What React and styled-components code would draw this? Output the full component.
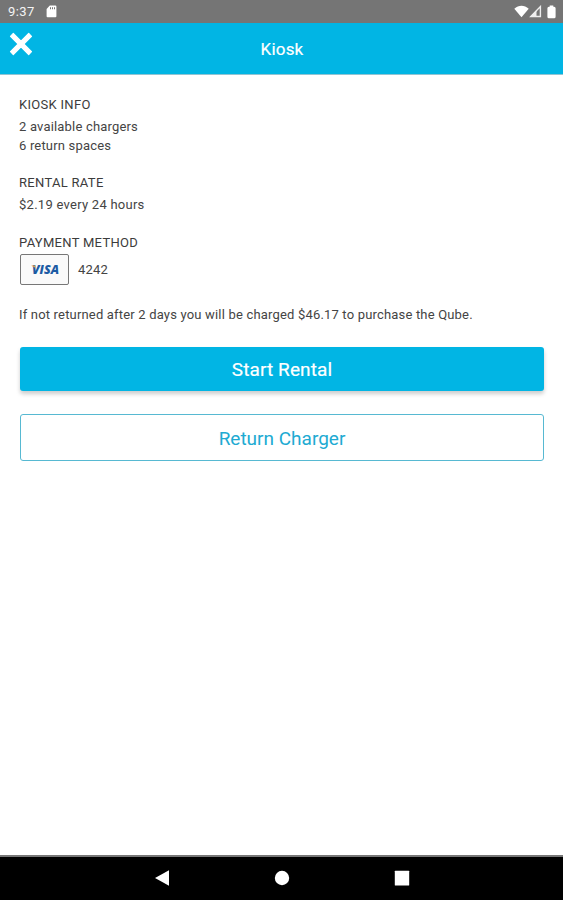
import React from "react";
import styled, { createGlobalStyle } from "styled-components";

const GlobalStyle = createGlobalStyle`
  * {
    box-sizing: border-box;
  }

  body {
    margin: 0;
    background: #fff;
    font-family: Roboto, "Liberation Sans", sans-serif;
  }
`;

const Screen = styled.div`
  display: flex;
  flex-direction: column;
  height: 100vh;
  overflow: hidden;
  background: #fff;
`;

const StatusBar = styled.div`
  display: flex;
  align-items: center;
  flex: none;
  height: 23px;
  padding: 0 7px 0 8px;
  background: #757575;
  color: #f4f4f4;
`;

const Clock = styled.span`
  width: 38px;
  padding-top: 1px;
  font-size: 13px;
  line-height: 22px;
  letter-spacing: 0.4px;
`;

const StatusIcons = styled.div`
  display: flex;
  align-items: center;
  margin-left: auto;
`;

const Header = styled.header`
  display: grid;
  grid-template-columns: 44px 1fr 44px;
  flex: none;
  height: 52px;
  background: #01b5e4;
  border-bottom: 1px solid #90c4d3;
`;

const CloseButton = styled.button`
  display: flex;
  align-items: flex-start;
  padding: 9px 0 0 9px;
  border: 0;
  background: none;
  color: #fff;
`;

const Title = styled.h1`
  margin: 0;
  padding-left: 1px;
  color: #fff;
  font-size: 17px;
  font-weight: 400;
  line-height: 53px;
  letter-spacing: 0.2px;
  text-align: center;
  -webkit-text-stroke: 0.2px #fff;
`;

const Content = styled.main`
  flex: 1;
  padding: 20px 19px 0 20px;
`;

const Section = styled.section`
  margin-bottom: 18px;
`;

const Label = styled.h2`
  margin: 0 0 2px -1px;
  color: #3c3c3c;
  font-size: 13px;
  font-weight: 400;
  line-height: 20px;
  letter-spacing: 0.3px;
`;

const Line = styled.p`
  margin: 0 0 0 -1px;
  color: #444;
  font-size: 13px;
  line-height: 19px;
  letter-spacing: 0.18px;
`;

const Rate = styled(Section)`
  margin-bottom: 19px;

  ${Line} {
    letter-spacing: 0.26px;
  }
`;

const Payment = styled.div`
  display: flex;
  align-items: center;
  gap: 10px;
  margin-top: -1px;
`;

const CardBadge = styled.div`
  width: 49px;
  height: 31px;
  border: 1px solid #777;
  border-radius: 2px;
  background: #fafafa;
`;

const Button = styled.button`
  display: block;
  width: 100%;
  height: ${(props) => (props.$outline ? "47px" : "44px")};
  margin-bottom: 23px;
  padding: ${(props) => (props.$outline ? "2px 0 0" : "0")};
  border: ${(props) => (props.$outline ? "1px solid #57b9d2" : "0")};
  border-radius: 3px;
  background: ${(props) => (props.$outline ? "#fff" : "#01b5e4")};
  box-shadow: ${(props) => (props.$outline ? "none" : "0 3px 4px rgba(0, 0, 0, 0.2)")};
  color: ${(props) => (props.$outline ? "#20aad2" : "#fff")};
  font-family: inherit;
  font-size: 19px;
  font-weight: 400;
  letter-spacing: ${(props) => (props.$outline ? "0" : "0.1px")};
  -webkit-text-stroke: ${(props) => (props.$outline ? "0" : "0.2px #fff")};
`;

const Note = styled(Line)`
  margin: 20px 0 23px -1px;
`;

const NavBar = styled.nav`
  display: flex;
  align-items: center;
  justify-content: center;
  gap: 104px;
  flex: none;
  height: 45px;
  padding-bottom: 2px;
  border-top: 2px solid #777;
  background: #000;
`;

const SdCardIcon = () => (
  <svg width="11" height="13" viewBox="0 0 11 13">
    <path
      fill="#fff"
      fillRule="evenodd"
      d="M3.8 0.5h5.6a1 1 0 0 1 1 1v9.8a1 1 0 0 1-1 1H1.6a1 1 0 0 1-1-1V4z M4 2.2v2h1v-2z M6 2.2v2h1v-2z M8 2.2v2h1v-2z"
    />
  </svg>
);

const WifiIcon = () => (
  <svg width="15" height="13" viewBox="0 0 15 13">
    <path fill="#fff" d="M0.3 3.7C4.5-0.2 10.5-0.2 14.7 3.7L7.5 12.2z" />
  </svg>
);

const SignalIcon = () => (
  <svg width="13" height="13" viewBox="0 0 13 13">
    <path fill="none" stroke="#eee" strokeWidth="1.4" d="M1.8 11.5L11.4 1.6v9.9z" />
    <path fill="#eee" d="M1 12l6.5-6.7V12z" />
  </svg>
);

const BatteryIcon = () => (
  <svg width="9" height="14" viewBox="0 0 9 14">
    <path
      fill="#fff"
      d="M2.7 0.4h3.6v1.4h0.8q1.5 0 1.5 1.5v8.4q0 1.5-1.5 1.5H1.9q-1.5 0-1.5-1.5V3.3q0-1.5 1.5-1.5h0.8z"
    />
  </svg>
);

const CloseIcon = () => (
  <svg width="24" height="24" viewBox="0 0 24 24">
    <path
      fill="#fff"
      stroke="#fff"
      strokeWidth="1.2"
      strokeLinejoin="round"
      d="M4.3 1.5L12 9.2L19.7 1.5L22.5 4.3L14.8 12L22.5 19.7L19.7 22.5L12 14.8L4.3 22.5L1.5 19.7L9.2 12L1.5 4.3z"
    />
  </svg>
);

const VisaLogo = () => (
  <svg width="47" height="29" viewBox="0 0 47 29">
    <text
      x="11"
      y="19"
      fill="#1c5ba4"
      fontFamily="Open Sans, sans-serif"
      fontSize="11.5"
      fontStyle="italic"
      fontWeight="800"
      textLength="27"
      lengthAdjust="spacingAndGlyphs"
    >
      VISA
    </text>
    <path fill="#e9a347" d="M10.6 10.5h3.4l1 3.4q-1.4-2.3-4.4-2.9z" />
  </svg>
);

const App = () => {
  return (
    <Screen>
      <GlobalStyle />
      <StatusBar>
        <Clock>9:37</Clock>
        <SdCardIcon />
        <StatusIcons>
          <WifiIcon />
          <SignalIcon />
          <svg width="5" height="13" />
          <BatteryIcon />
        </StatusIcons>
      </StatusBar>

      <Header>
        <CloseButton aria-label="Close">
          <CloseIcon />
        </CloseButton>
        <Title>Kiosk</Title>
      </Header>

      <Content>
        <Section>
          <Label>KIOSK INFO</Label>
          <Line>2 available chargers</Line>
          <Line>6 return spaces</Line>
        </Section>

        <Rate>
          <Label>RENTAL RATE</Label>
          <Line>$2.19 every 24 hours</Line>
        </Rate>

        <Section>
          <Label>PAYMENT METHOD</Label>
          <Payment>
            <CardBadge>
              <VisaLogo />
            </CardBadge>
            <Line>4242</Line>
          </Payment>
        </Section>

        <Note>If not returned after 2 days you will be charged $46.17 to purchase the Qube.</Note>

        <Button>Start Rental</Button>
        <Button $outline>Return Charger</Button>
      </Content>

      <NavBar>
        <svg width="16" height="16" viewBox="0 0 16 16">
          <path fill="#fff" d="M1 8L15 0.3v15.4z" />
        </svg>
        <svg width="16" height="16" viewBox="0 0 16 16">
          <circle cx="8" cy="8" r="7.2" fill="#fff" />
        </svg>
        <svg width="16" height="16" viewBox="0 0 16 16">
          <rect x="0.8" y="0.8" width="14.4" height="14.6" rx="0.5" fill="#fff" />
        </svg>
      </NavBar>
    </Screen>
  );
};

export default App;
